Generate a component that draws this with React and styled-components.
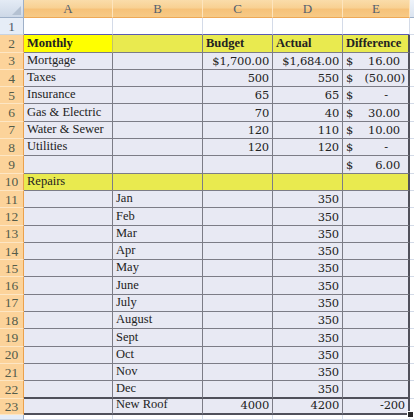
import React from "react";
import styled, { createGlobalStyle, css } from "styled-components";

const Global = createGlobalStyle`
  html, body {
    margin: 0;
    padding: 0;
    background: #ffffff;
  }
`;

const cols = ["A", "B", "C", "D", "E"];

// each row: [A, B, C, D, E]; E can be a money object
const rows = [
  { n: 2, kind: "title", cells: ["Monthly", "", "Budget", "Actual", "Difference"] },
  { n: 3, cells: ["Mortgage", "", "$1,700.00", "$1,684.00", { v: "16.00" }] },
  { n: 4, cells: ["Taxes", "", "500", "550", { v: "(50.00)", neg: true }] },
  { n: 5, cells: ["Insurance", "", "65", "65", { v: "-", dash: true }] },
  { n: 6, cells: ["Gas & Electric", "", "70", "40", { v: "30.00" }] },
  { n: 7, cells: ["Water & Sewer", "", "120", "110", { v: "10.00" }] },
  { n: 8, cells: ["Utilities", "", "120", "120", { v: "-", dash: true }] },
  { n: 9, cells: ["", "", "", "", { v: "6.00" }] },
  { n: 10, kind: "band", cells: ["Repairs", "", "", "", ""] },
  ...["Jan", "Feb", "Mar", "Apr", "May", "June", "July", "August", "Sept", "Oct", "Nov", "Dec"].map(
    (m, i) => ({ n: 11 + i, last: m === "Dec", cells: ["", m, "", "350", ""] })
  ),
  { n: 23, total: true, cells: ["", "New Roof", "4000", "4200", "-200"] },
];

const Sheet = styled.div`
  position: relative;
  display: grid;
  grid-template-columns: 24px 89px 90px 70px 70px 67px 1fr;
  grid-template-rows: 18px repeat(22, 17.3px) 16.4px 1fr;
  width: 414px;
  height: 420px;
  overflow: hidden;
  background: #ffffff;
  font-family: "Liberation Serif", "Times New Roman", serif;
  font-size: 12.5px;
  color: #222222;
`;

const Corner = styled.div`
  position: relative;
  box-sizing: border-box;
  background: linear-gradient(#e4ebf5, #cdd8e7);
  border-right: 1px solid #9eb0c8;
  border-bottom: 1px solid #9eb0c8;

  &::after {
    content: "";
    position: absolute;
    right: 2px;
    bottom: 2px;
    border-style: solid;
    border-width: 0 0 9px 9px;
    border-color: transparent transparent #b4c1d2 transparent;
  }
`;

const ColHead = styled.div`
  box-sizing: border-box;
  display: flex;
  align-items: center;
  justify-content: center;
  padding-top: 1px;
  color: #53606e;
  font-size: 13px;
  border-right: 1px solid #fde4bd;
  border-bottom: 1px solid #eea957;
  background: linear-gradient(#fadcaa 0%, #f8d193 45%, #f6c27a 55%, #f7ca86 100%);

  ${(p) =>
    !p.$sel &&
    css`
      background: linear-gradient(#eef3fa, #dbe4f0);
      border-bottom-color: #9eb0c8;
      border-right: 1px solid #c8d3e2;
    `}
`;

const RowHead = styled.div`
  box-sizing: border-box;
  display: flex;
  align-items: center;
  justify-content: center;
  padding-top: 1px;
  color: #545c4a;
  font-size: 13.5px;
  background: #fcd39a;
  border-right: 1px solid #eba14c;
  border-bottom: 1px solid #fde6c4;

  ${(p) =>
    !p.$sel &&
    css`
      background: #e6edf7;
      color: #4d5b6a;
      border-right-color: #9eb0c8;
      border-bottom-color: #c8d3e2;
    `}
`;

const fills = {
  sel: "#e8e9f3",
  band: "#e9ea4f",
  active: "#ffff00",
  white: "#ffffff",
};

const Cell = styled.div`
  box-sizing: border-box;
  display: flex;
  align-items: flex-end;
  justify-content: ${(p) => (p.$num ? "flex-end" : "flex-start")};
  padding: 0 3px 1px 3px;
  overflow: visible;
  white-space: nowrap;
  background: ${(p) => fills[p.$fill || "sel"]};
  border-right: 1px solid ${(p) => p.$rightColor || "#7c7c86"};
  border-bottom: 1px solid #7c7c86;
  font-weight: ${(p) => (p.$bold ? 700 : 400)};
  ${(p) =>
    p.$num &&
    css`
      font-family: "DejaVu Serif", serif;
      font-size: 11.5px;
      letter-spacing: -0.2px;
    `}
  ${(p) =>
    p.$edge &&
    css`
      border-right: 2px solid #50505a;
    `}
  ${(p) =>
    p.$thickBottom &&
    css`
      border-bottom: 2px solid #50505a;
    `}
  ${(p) =>
    p.$blank &&
    css`
      background: #ffffff;
      border-right: 1px solid #d4dbe8;
      border-bottom: 1px solid ${p.$topSel ? "#5a5ab4" : "#d4dbe8"};
    `}
`;

const Money = styled.div`
  display: flex;
  justify-content: space-between;
  align-items: flex-end;
  width: 100%;
  font-family: "DejaVu Serif", serif;
  font-size: 11.5px;
  letter-spacing: -0.2px;
`;

const Amount = styled.span`
  padding-right: ${(p) => p.$pad}px;
`;

const Handle = styled.div`
  position: absolute;
  left: 407px;
  top: 411px;
  width: 5px;
  height: 5px;
  background: #2a2a2a;
  border: 1px solid #ffffff;
`;

function renderE(val, props) {
  const pad = val.neg ? 0 : val.dash ? 17 : 5;
  return (
    <Cell {...props} $edge>
      <Money>
        <span>$</span>
        <Amount $pad={pad}>{val.v}</Amount>
      </Money>
    </Cell>
  );
}

export default function App() {
  return (
    <>
      <Global />
      <Sheet>
        <Corner />
        {cols.map((c) => (
          <ColHead key={c} $sel>
            {c}
          </ColHead>
        ))}
        <ColHead />

        {/* row 1, outside the selection */}
        <RowHead>1</RowHead>
        {cols.map((c) => (
          <Cell key={c} $blank $topSel />
        ))}
        <Cell $blank />

        {rows.map((r) => {
          const thick = r.last || r.total;
          const fill = r.kind === "title" || r.kind === "band" ? "band" : "sel";
          return (
            <React.Fragment key={r.n}>
              <RowHead $sel>{r.n}</RowHead>
              {r.cells.map((v, i) => {
                const isE = i === 4;
                const cellFill = r.kind === "title" && i === 0 ? "active" : fill;
                const props = { $thickBottom: thick, $fill: cellFill };
                if (isE && typeof v === "object") return <React.Fragment key={i}>{renderE(v, props)}</React.Fragment>;
                const isNum = v !== "" && /^[-$0-9(]/.test(v) && r.kind !== "title";
                return (
                  <Cell
                    key={i}
                    {...props}
                    $num={isNum}
                    $bold={r.kind === "title"}
                    $edge={isE}
                    $rightColor={r.kind === "title" && i === 0 ? "#c2c26a" : undefined}
                  >
                    {v}
                  </Cell>
                );
              })}
              <Cell $blank />
            </React.Fragment>
          );
        })}

        {/* row 24 only peeks in at the bottom */}
        <RowHead />
        {cols.map((c) => (
          <Cell key={c} $blank />
        ))}
        <Cell $blank />
        <Handle />
      </Sheet>
    </>
  );
}
